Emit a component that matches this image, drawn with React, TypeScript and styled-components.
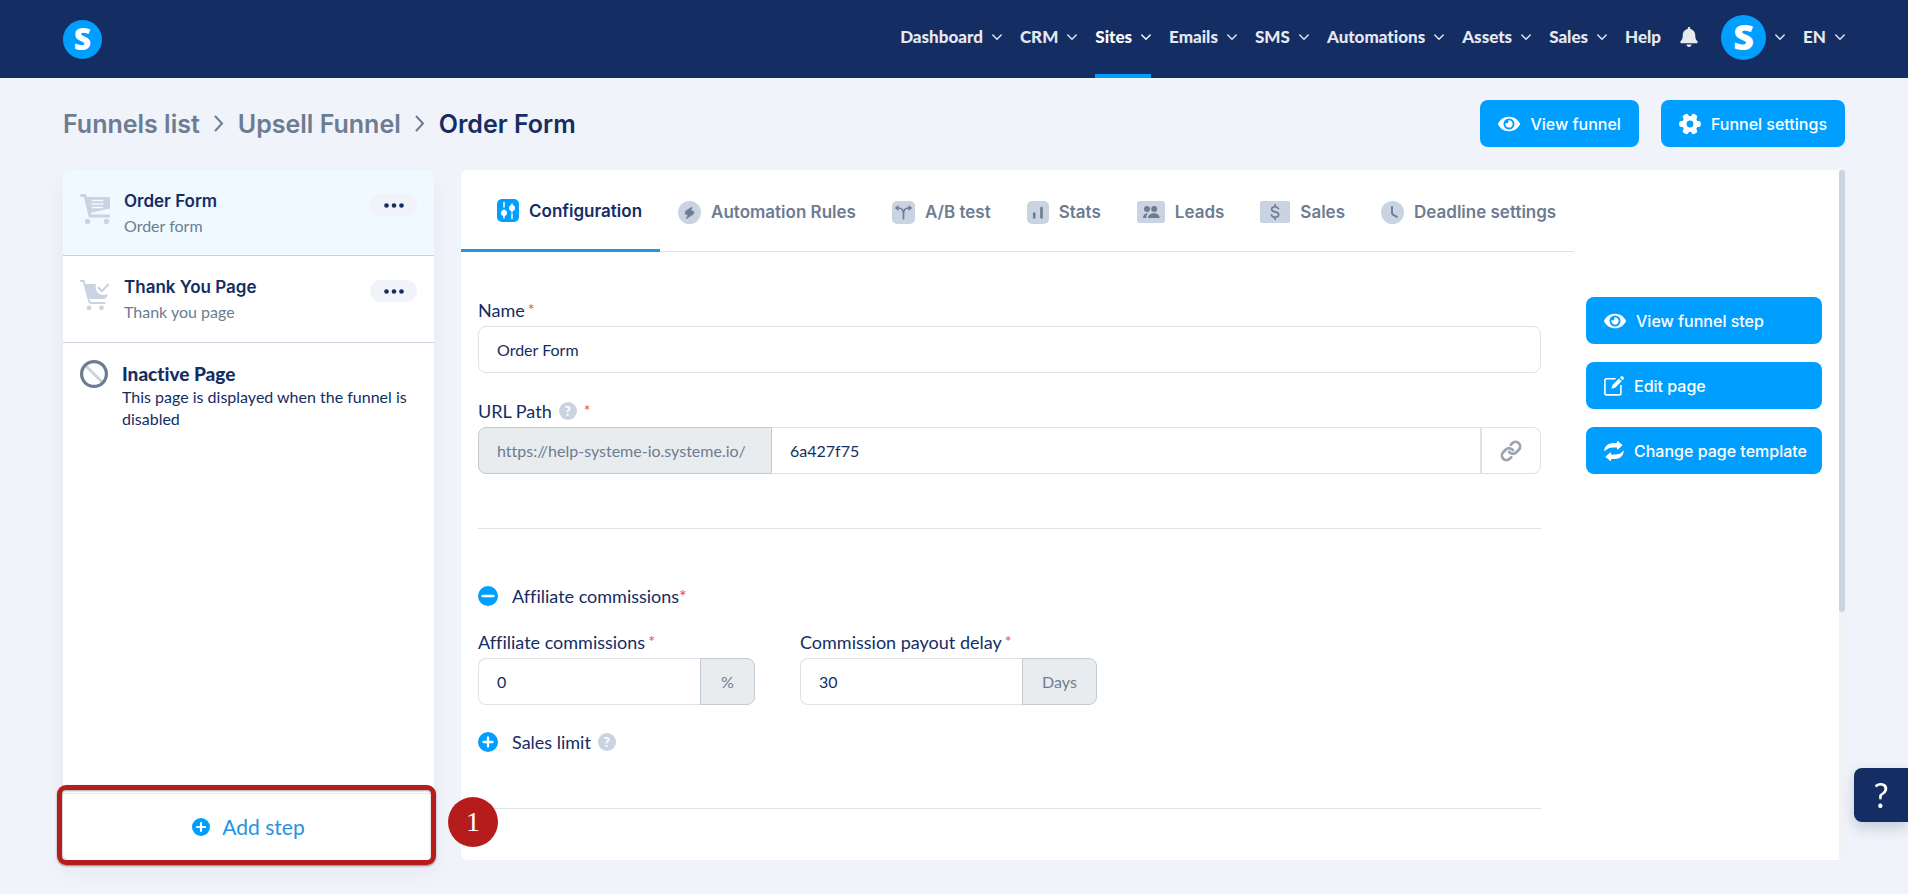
import React from 'react';
import styled, { createGlobalStyle } from 'styled-components';
import { FaBell, FaEye } from 'react-icons/fa';
import { Link } from 'lucide-react';

const navy = '#142d63';
const blue = '#009fff';
const grey = '#6c7c92';
const pale = '#cad3e1';
const canvas = '#f0f3f9';
const line = '#dfe2e5';

const GlobalStyle = createGlobalStyle`
  * { box-sizing: border-box; }
  body { margin: 0; background: ${canvas}; color: ${navy}; font: 18px/24px Lato, sans-serif; font-variant-ligatures: none; }
  button, input { font: inherit; color: inherit; margin: 0; padding: 0; border: 0; background: none; }
  button { cursor: pointer; }
  a { color: inherit; text-decoration: none; }
  svg { display: block; flex: none; }
`;

const Page = styled.div`
  min-height: 100vh;
  display: flex;
  flex-direction: column;
`;

/* ---------- top bar ---------- */

const TopBar = styled.header`
  display: flex;
  justify-content: space-between;
  align-items: center;
  height: 78px;
  padding: 0 63px;
  background: ${navy};
`;

const Logo = styled.span<{ $size: number }>`
  display: flex;
  align-items: center;
  justify-content: center;
  width: ${p => p.$size}px;
  height: ${p => p.$size}px;
  border-radius: 50%;
  background: ${blue};
  color: #fff;
  font: 800 ${p => (p.$size > 40 ? 36 : 30)}px/1 'Open Sans', sans-serif;
`;

const Nav = styled.nav`
  display: flex;
  align-items: center;
  gap: 18px;
`;

const NavItem = styled.button<{ $active?: boolean }>`
  display: flex;
  align-items: center;
  gap: 9px;
  height: 78px;
  padding-bottom: 4px;
  color: ${p => (p.$active ? '#fff' : '#e4e8f0')};
  font-weight: 900;
  font-size: 17px;
  box-shadow: ${p => (p.$active ? `inset 0 -4px 0 ${blue}` : 'none')};
`;

const BellButton = styled.button`
  color: #e8eaee;
  padding: 0 4px 4px 0;
`;

/* ---------- heading row ---------- */

const HeadRow = styled.div`
  display: flex;
  justify-content: space-between;
  align-items: center;
  padding: 22px 63px 23px;
`;

const Crumbs = styled.nav`
  display: flex;
  align-items: center;
  gap: 14px;
  font: 600 25px/32px Inter, sans-serif;
  color: ${grey};
`;

const Current = styled.span`
  color: ${navy};
`;

const Actions = styled.div`
  display: flex;
  gap: 22px;
`;

const Primary = styled.button`
  display: flex;
  align-items: center;
  gap: 10px;
  height: 47px;
  padding: 0 18px;
  border-radius: 8px;
  background: ${blue};
  color: #fff;
  font: 500 16px/20px Inter, sans-serif;
  white-space: nowrap;
`;

/* ---------- sidebar ---------- */

const Workspace = styled.div`
  flex: 1;
  display: flex;
  gap: 27px;
  padding: 0 63px 34px;
`;

const Sidebar = styled.aside`
  flex: none;
  display: flex;
  flex-direction: column;
  width: 371px;
  background: #fff;
  border-radius: 8px;
  box-shadow: 0 12px 20px rgba(20, 45, 99, 0.05);
`;

const Step = styled.div<{ $active?: boolean }>`
  display: flex;
  align-items: flex-start;
  gap: 14px;
  height: ${p => (p.$active ? 86 : 87)}px;
  padding: 24px 17px 0;
  border-bottom: 1px solid #c9d1dc;
  border-radius: ${p => (p.$active ? '8px 8px 0 0' : '0')};
  background: ${p => (p.$active ? '#f0f9ff' : '#fff')};
`;

const StepText = styled.div`
  flex: 1;
  margin-top: -6px;
`;

const StepTitle = styled.div`
  font: 600 17px/26px Inter, sans-serif;
`;

const StepSub = styled.div`
  color: ${grey};
  font-size: 16px;
  line-height: 24px;
`;

const More = styled.button`
  display: flex;
  align-items: center;
  justify-content: center;
  width: 47px;
  height: 22px;
  border-radius: 11px;
  background: #f0f3f9;
`;

const Inactive = styled.div`
  display: flex;
  align-items: flex-start;
  gap: 14px;
  padding: 17px 12px 0 17px;
`;

const InactiveTitle = styled.div`
  padding-top: 2px;
  font-weight: 900;
  font-size: 19px;
  line-height: 24px;
`;

const InactiveText = styled.div`
  font-size: 16px;
  line-height: 22px;
`;

const SidebarFoot = styled.div`
  position: relative;
  margin-top: auto;
  border-top: 1px solid #e9ecef;
`;

const AddStep = styled.button`
  display: flex;
  align-items: center;
  justify-content: center;
  gap: 12px;
  width: 100%;
  height: 66px;
  color: #1f93e6;
  font-size: 21px;
`;

const Highlight = styled.div`
  position: absolute;
  inset: -9px -2px -5px -6px;
  border: 5px solid #b71c1c;
  border-radius: 9px;
  box-shadow: 0 1px 2px rgba(0, 0, 0, 0.45), inset 0 1px 2px rgba(0, 0, 0, 0.35);
  pointer-events: none;
`;

const Marker = styled.div`
  position: absolute;
  top: 3px;
  right: -64px;
  display: flex;
  align-items: center;
  justify-content: center;
  width: 50px;
  height: 50px;
  border-radius: 50%;
  background: #b71c1c;
  color: #fff;
  font: 28px/1 'Liberation Serif', serif;
`;

/* ---------- main panel ---------- */

const Panel = styled.main`
  flex: 1;
  display: flex;
  min-width: 0;
  background: #fff;
  border-radius: 6px;
`;

const PanelBody = styled.div`
  flex: 1;
  min-width: 0;
`;

const ScrollTrack = styled.div`
  width: 6px;
  border-radius: 3px;
  background: #f1f2f4;
`;

const ScrollThumb = styled.div`
  height: 64%;
  border-radius: 3px;
  background: ${pale};
`;

const Tabs = styled.div`
  display: flex;
  width: max-content;
  height: 82px;
  border-bottom: 1px solid ${line};
`;

const Tab = styled.button<{ $active?: boolean }>`
  display: flex;
  align-items: center;
  gap: 10px;
  height: 82px;
  padding: ${p => (p.$active ? '2px 18px 0 36px' : '2px 18px 0')};
  border-bottom: ${p => (p.$active ? '3px solid #2196e8' : '0')};
  color: ${p => (p.$active ? navy : grey)};
  font: 600 17px/24px Inter, sans-serif;
  white-space: nowrap;
`;

const Columns = styled.div`
  display: flex;
  gap: 45px;
  padding: 45px 17px 0;
`;

const Form = styled.form`
  flex: 1;
  min-width: 0;
`;

const Side = styled.div`
  display: flex;
  flex-direction: column;
  gap: 18px;
  width: 236px;
`;

const LabelRow = styled.div`
  display: flex;
  align-items: center;
  height: 29px;
  padding-bottom: 4px;
`;

const Field = styled.div`
  margin-bottom: 25px;
`;

const Star = styled.span`
  align-self: flex-start;
  margin-left: 3px;
  color: #f0415f;
  font-size: 16px;
  line-height: 24px;
`;

const InlineStar = styled.span`
  color: #f0415f;
`;

const Help = styled.button`
  display: flex;
  align-items: center;
  justify-content: center;
  width: 18px;
  height: 18px;
  margin: 0 4px 0 7px;
  border-radius: 50%;
  background: ${pale};
  color: #fff;
  font-weight: 900;
  font-size: 13px;
  line-height: 18px;
`;

const Group = styled.div<{ $width?: string }>`
  display: flex;
  width: ${p => p.$width || '100%'};
  height: 47px;
`;

const TextInput = styled.input<{ $joinLeft?: boolean; $joinRight?: boolean }>`
  flex: 1;
  min-width: 0;
  width: 100%;
  height: 47px;
  padding: 0 18px;
  border: 1px solid ${line};
  border-left-width: ${p => (p.$joinLeft ? 0 : 1)}px;
  border-right-width: ${p => (p.$joinRight ? 0 : 1)}px;
  border-radius: ${p => (p.$joinLeft ? '0' : p.$joinRight ? '8px 0 0 8px' : '8px')};
  background: #fff;
  font-size: 16px;
`;

const Addon = styled.span<{ $width: number; $end?: boolean }>`
  display: flex;
  align-items: center;
  justify-content: ${p => (p.$end ? 'center' : 'flex-start')};
  flex: none;
  width: ${p => p.$width}px;
  padding: ${p => (p.$end ? '0' : '0 18px')};
  border: 1px solid #c3cad1;
  border-radius: ${p => (p.$end ? '0 8px 8px 0' : '8px 0 0 8px')};
  background: #e9ecef;
  color: ${grey};
  font-size: 16px;
`;

const LinkButton = styled.button`
  display: flex;
  align-items: center;
  justify-content: center;
  width: 61px;
  border: 1px solid ${line};
  border-left-width: 2px;
  border-radius: 0 8px 8px 0;
  color: #9aa5b1;
`;

const Rule = styled.hr`
  height: 1px;
  margin: 0;
  border: 0;
  background: ${line};
`;

const Toggle = styled.button`
  display: flex;
  align-items: center;
  gap: 14px;
  height: 24px;
`;

const ToggleRow = styled.div`
  display: flex;
  align-items: center;
`;

const Basics = styled.div`
  padding-bottom: 29px;
`;

const Section = styled.div`
  padding: 55px 0 54px;
`;

const Pair = styled.div`
  display: flex;
  gap: 45px;
  margin-top: 21px;
`;

const HelpTab = styled.button`
  position: fixed;
  right: 0;
  top: 768px;
  width: 54px;
  height: 54px;
  border-radius: 8px 0 0 8px;
  background: ${navy};
  color: #fff;
  font: 400 34px/54px Lato, sans-serif;
  box-shadow: 0 6px 14px rgba(20, 45, 99, 0.2);
`;

/* ---------- icons ---------- */

const Chevron = () => (
  <svg width="10" height="7" viewBox="0 0 10 7" fill="none" stroke="currentColor" strokeWidth="1.4" strokeLinecap="round">
    <path d="M.8 1 5 5.2 9.2 1" />
  </svg>
);

const CrumbArrow = () => (
  <svg width="10" height="17" viewBox="0 0 10 17" fill="none" stroke={grey} strokeWidth="2" strokeLinecap="round">
    <path d="m1.5 1.5 6.5 7-6.5 7" />
  </svg>
);

const Gear = () => (
  <svg width="22" height="22" viewBox="0 0 24 24" fill="none">
    <circle cx="12" cy="12" r="6.2" stroke="#fff" strokeWidth="5" />
    <g fill="#fff">
      {[0, 60, 120, 180, 240, 300].map(a => (
        <rect key={a} x="17.5" y="8.7" width="6.3" height="6.6" rx="2.4" transform={`rotate(${a} 12 12)`} />
      ))}
    </g>
  </svg>
);

const Pencil = () => (
  <svg width="20" height="20" viewBox="0 0 20 20" fill="none">
    <path d="M11 2.8H2.4C1.5 2.8.9 3.4.9 4.3v13.1c0 .9.6 1.5 1.5 1.5h13c.9 0 1.500-.6 1.500-1.500V9.500" stroke="#fff" strokeWidth="1.600" strokeLinecap="round" />
    <path d="M7.300 12.800 8.500 9 15 2.500l2.700 2.700-6.600 6.500zM15.900 1.600l1-1c.6-.6 1.400-.6 2 0l.6.600c.6.600.6 1.400 0 2l-1 1z" fill="#fff" />
  </svg>
);

const Refresh = () => (
  <svg width="20" height="20" viewBox="0 0 20 20" fill="#fff">
    <path d="M.2 10.500C.2 5.500 4.200 2 9.200 2H13V.6c0-.6.600-.8 1-.4l4.200 3.600c.3.300.3.700 0 1L14 8.300c-.4.400-1 .1-1-.4V6.400H9.600C5.600 6.400 2.600 7.600.2 10.500z" />
    <path d="M19.800 9.500c0 5-4 8.500-9 8.500H7v1.400c0 .6-.6.800-1 .4l-4.200-3.600c-.3-.3-.3-.7 0-1L6 11.700c.4-.4 1-.1 1 .4v1.500h3.400c4 0 7-1.200 9.400-4.100z" />
  </svg>
);

const CartForm = () => (
  <svg width="30" height="30" viewBox="0 0 30 30" fill="none">
    <path d="M1.500 1.500H5L10 22h19" stroke={pale} strokeWidth="3" strokeLinecap="round" strokeLinejoin="round" />
    <path d="M6 3h24v11.500L9.500 19z" fill={pale} />
    <path d="M11.500 6.500h12M11.500 10h12M12 13.500h11" stroke="#f0f9ff" strokeWidth="1.300" />
    <circle cx="7.500" cy="27.500" r="2.700" fill={pale} />
    <circle cx="26.500" cy="27.500" r="2.700" fill={pale} />
  </svg>
);

const CartCheck = () => (
  <svg width="30" height="30" viewBox="0 0 30 30" fill="none">
    <path d="M.8 1h2.800L9 20.500c.5 1.800 1 2.500 2.500 2.500h13" stroke={pale} strokeWidth="2" strokeLinecap="round" />
    <path d="M5 4h11c-1.500 5.500 1.500 11 7.500 11 1.500 0 3-.4 4.500-1.200-1.300 3.700-2.300 5.200-5 5.200H10C7 15 6 9 5 4z" fill={pale} />
    <path d="m18.500 7.800 3.300 3.400 6.300-6.400" stroke={pale} strokeWidth="2.200" strokeLinecap="round" />
    <circle cx="9" cy="27.800" r="2.300" fill={pale} />
    <circle cx="21.500" cy="27.800" r="2.300" fill={pale} />
  </svg>
);

const Blocked = () => (
  <svg width="28" height="28" viewBox="0 0 28 28" fill="none">
    <path d="m6 6 16 16" stroke={pale} strokeWidth="3" />
    <circle cx="14" cy="14" r="12.400" stroke={grey} strokeWidth="3.200" />
  </svg>
);

const Dots = () => (
  <svg width="20" height="5" viewBox="0 0 20 5" fill={navy}>
    <circle cx="2.500" cy="2.500" r="2.300" />
    <circle cx="10" cy="2.500" r="2.300" />
    <circle cx="17.500" cy="2.500" r="2.300" />
  </svg>
);

const RoundSign = ({ size, plus }: { size: number; plus?: boolean }) => (
  <svg width={size} height={size} viewBox="0 0 20 20" fill="none">
    <circle cx="10" cy="10" r="10" fill={blue} />
    <path d={plus ? 'M5.500 10h9M10 5.500v9' : 'M4.500 10h11'} stroke="#fff" strokeWidth="2.300" strokeLinecap="round" />
  </svg>
);

const tabIcons = {
  config: (
    <svg width="22" height="23" viewBox="0 0 22 23" fill="none">
      <rect width="22" height="23" rx="5" fill={blue} />
      <path d="M7 3.500v4.500M7 11v8M15 5v8M15 15v4.500" stroke="#fff" strokeWidth="1.500" strokeLinecap="round" />
      <circle cx="7" cy="14" r="3" fill="#fff" />
      <circle cx="15" cy="9" r="3" fill="#fff" />
    </svg>
  ),
  rules: (
    <svg width="23" height="23" viewBox="0 0 23 23">
      <circle cx="11.500" cy="11.500" r="11.500" fill={pale} />
      <path d="M14 6 7.500 10.200l-.3 3 2.800.2-1.700 4.300 7.200-4.600.3-2.800-2.800-.2z" fill={grey} stroke={grey} strokeWidth=".6" strokeLinejoin="round" />
    </svg>
  ),
  split: (
    <svg width="23" height="23" viewBox="0 0 23 23" fill="none">
      <rect width="23" height="23" rx="5" fill={pale} />
      <path d="M11.500 18.500v-5.500c0-3.500-1.500-6-5-6H4M11.500 13c0-3.500 1.500-6 5-6H19" stroke={grey} strokeWidth="1.600" />
      <path d="M6.500 4v6L2.800 7zM16.500 4v6l3.700-3z" fill={grey} />
    </svg>
  ),
  stats: (
    <svg width="22" height="23" viewBox="0 0 22 23" fill="none">
      <rect width="22" height="23" rx="5" fill={pale} />
      <path d="M7.200 12.500v4M14.500 7v9.500" stroke={grey} strokeWidth="2.600" strokeLinecap="round" />
    </svg>
  ),
  leads: (
    <svg width="28" height="22" viewBox="0 0 28 22" fill={grey}>
      <rect width="28" height="22" rx="2.500" fill={pale} />
      <circle cx="10" cy="8" r="3" />
      <circle cx="17.200" cy="8" r="3" />
      <path d="M6 17c0-3 1.800-4.700 5-4.700-1.200 1.200-1.700 2.700-1.700 4.700zM11 17c.2-3 2.500-4.700 6-4.700 3.300 0 5.500 1.700 5.700 4.700z" />
    </svg>
  ),
  sales: (
    <svg width="30" height="22" viewBox="0 0 30 22" fill="none">
      <rect width="30" height="22" rx="2" fill={pale} />
      <path d="M18.500 7.700c-.6-1.300-1.800-2-3.400-2-2 0-3.500.9-3.500 2.500 0 3.800 7.100 1.600 7.100 5.300 0 1.700-1.500 2.700-3.600 2.700-1.900 0-3.200-.8-3.700-2.300M15.100 3.500v2.200M15.100 16.200v2.300" stroke={grey} strokeWidth="1.600" strokeLinecap="round" />
    </svg>
  ),
  clock: (
    <svg width="23" height="23" viewBox="0 0 23 23" fill="none">
      <circle cx="11.500" cy="11.500" r="11.500" fill={pale} />
      <path d="M11 6v6c0 1.500 2.500 2.800 5 3.800" stroke={grey} strokeWidth="1.900" strokeLinecap="round" />
    </svg>
  ),
};

const menu = ['Dashboard', 'CRM', 'Sites', 'Emails', 'SMS', 'Automations', 'Assets', 'Sales'];

const tabs: { label: string; icon: keyof typeof tabIcons }[] = [
  { label: 'Configuration', icon: 'config' },
  { label: 'Automation Rules', icon: 'rules' },
  { label: 'A/B test', icon: 'split' },
  { label: 'Stats', icon: 'stats' },
  { label: 'Leads', icon: 'leads' },
  { label: 'Sales', icon: 'sales' },
  { label: 'Deadline settings', icon: 'clock' },
];

export default function App() {
  return (
    <Page>
      <GlobalStyle />
      <TopBar>
        <a href="#home" aria-label="Home">
          <Logo $size={39}>S</Logo>
        </a>
        <Nav>
          {menu.map(m => (
            <NavItem key={m} $active={m === 'Sites'}>
              {m}
              <Chevron />
            </NavItem>
          ))}
          <NavItem>Help</NavItem>
          <BellButton aria-label="Notifications">
            <FaBell size={20} />
          </BellButton>
          <NavItem aria-label="Account">
            <Logo $size={45}>S</Logo>
            <Chevron />
          </NavItem>
          <NavItem>
            EN
            <Chevron />
          </NavItem>
        </Nav>
      </TopBar>

      <HeadRow>
        <Crumbs aria-label="Breadcrumb">
          <a href="#funnels">Funnels list</a>
          <CrumbArrow />
          <a href="#upsell">Upsell Funnel</a>
          <CrumbArrow />
          <Current>Order Form</Current>
        </Crumbs>
        <Actions>
          <Primary>
            <FaEye size={22} />
            View funnel
          </Primary>
          <Primary>
            <Gear />
            Funnel settings
          </Primary>
        </Actions>
      </HeadRow>

      <Workspace>
        <Sidebar>
          <Step $active>
            <CartForm />
            <StepText>
              <StepTitle>Order Form</StepTitle>
              <StepSub>Order form</StepSub>
            </StepText>
            <More aria-label="Order Form options">
              <Dots />
            </More>
          </Step>
          <Step>
            <CartCheck />
            <StepText>
              <StepTitle>Thank You Page</StepTitle>
              <StepSub>Thank you page</StepSub>
            </StepText>
            <More aria-label="Thank You Page options">
              <Dots />
            </More>
          </Step>
          <Inactive>
            <Blocked />
            <div>
              <InactiveTitle>Inactive Page</InactiveTitle>
              <InactiveText>This page is displayed when the funnel is disabled</InactiveText>
            </div>
          </Inactive>
          <SidebarFoot>
            <AddStep>
              <RoundSign size={18} plus />
              Add step
            </AddStep>
            <Highlight />
            <Marker>1</Marker>
          </SidebarFoot>
        </Sidebar>

        <Panel>
          <PanelBody>
            <Tabs role="tablist">
              {tabs.map((t, i) => (
                <Tab key={t.label} role="tab" aria-selected={i === 0} $active={i === 0}>
                  {tabIcons[t.icon]}
                  {t.label}
                </Tab>
              ))}
            </Tabs>
            <Columns>
              <Form>
                <Basics>
                  <Field>
                    <LabelRow>
                      <label htmlFor="name">Name</label>
                      <Star>*</Star>
                    </LabelRow>
                    <TextInput id="name" defaultValue="Order Form" />
                  </Field>
                  <Field>
                    <LabelRow>
                      <label htmlFor="path">URL Path</label>
                      <Help type="button">?</Help>
                      <Star>*</Star>
                    </LabelRow>
                    <Group>
                      <Addon $width={294}>https://help-systeme-io.systeme.io/</Addon>
                      <TextInput id="path" defaultValue="6a427f75" $joinLeft $joinRight />
                      <LinkButton type="button" aria-label="Copy link">
                        <Link size={22} strokeWidth={3} />
                      </LinkButton>
                    </Group>
                  </Field>
                </Basics>
                <Rule />
                <Section>
                  <Toggle type="button">
                    <RoundSign size={20} />
                    <span>
                      Affiliate commissions<InlineStar>*</InlineStar>
                    </span>
                  </Toggle>
                  <Pair>
                    <Field>
                      <LabelRow>
                        <label htmlFor="rate">Affiliate commissions</label>
                        <Star>*</Star>
                      </LabelRow>
                      <Group $width="277px">
                        <TextInput id="rate" defaultValue="0" $joinRight />
                        <Addon $width={55} $end>%</Addon>
                      </Group>
                    </Field>
                    <Field>
                      <LabelRow>
                        <label htmlFor="delay">Commission payout delay</label>
                        <Star>*</Star>
                      </LabelRow>
                      <Group $width="297px">
                        <TextInput id="delay" defaultValue="30" $joinRight />
                        <Addon $width={75} $end>Days</Addon>
                      </Group>
                    </Field>
                  </Pair>
                  <ToggleRow>
                    <Toggle type="button">
                      <RoundSign size={20} plus />
                      Sales limit
                    </Toggle>
                    <Help type="button">?</Help>
                  </ToggleRow>
                </Section>
                <Rule />
              </Form>
              <Side>
                <Primary>
                  <FaEye size={22} />
                  View funnel step
                </Primary>
                <Primary>
                  <Pencil />
                  Edit page
                </Primary>
                <Primary>
                  <Refresh />
                  Change page template
                </Primary>
              </Side>
            </Columns>
          </PanelBody>
          <ScrollTrack>
            <ScrollThumb />
          </ScrollTrack>
        </Panel>
      </Workspace>
      <HelpTab aria-label="Help">?</HelpTab>
    </Page>
  );
}
